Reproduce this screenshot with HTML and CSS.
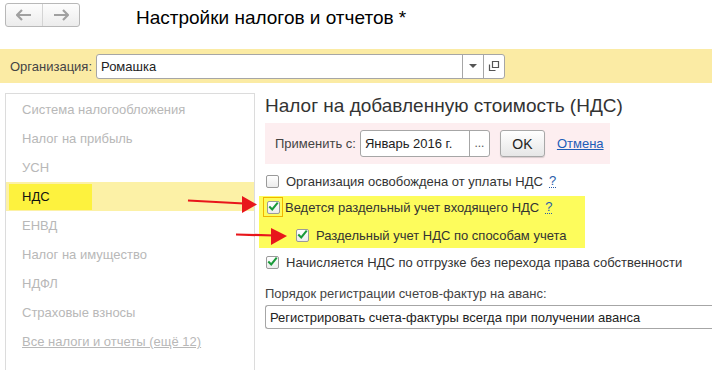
FILE: index.html
```html
<!DOCTYPE html>
<html lang="ru">
<head>
    <meta charset="UTF-8">
    <title>Настройки налогов и отчетов</title>
    <link rel="stylesheet" href="styles.css">
</head>
<body>
    <div class="topbar">
        <div class="navgroup">
            <span class="navbtn">
                <svg width="16" height="12" viewBox="0 0 16 12"><path d="M1 6h14M6 1L1 6l5 5" fill="none" stroke="#a0a0a0" stroke-width="2.2"/></svg>
            </span>
            <span class="navbtn">
                <svg width="16" height="12" viewBox="0 0 16 12"><path d="M1 6h14M10 1l5 5-5 5" fill="none" stroke="#a0a0a0" stroke-width="2.2"/></svg>
            </span>
        </div>
        <div class="title">Настройки налогов и отчетов *</div>
    </div>

    <div class="orgbar">
        <span class="orglabel">Организация:</span>
        <div class="field orgfield">
            <span class="fieldtext">Ромашка</span>
            <span class="fieldbtn"><svg width="8" height="4" viewBox="0 0 8 4"><path d="M0 0h8L4 4z" fill="#555"/></svg></span>
            <span class="fieldbtn"><svg width="12" height="12" viewBox="0 0 12 12"><path d="M4.5 1.5h6v6h-6z M1.5 4.5v6h6" fill="none" stroke="#555" stroke-width="1.2"/></svg></span>
        </div>
    </div>

    <div class="main">
        <div class="sidebar">
            <div class="navitem">Система налогообложения</div>
            <div class="navitem">Налог на прибыль</div>
            <div class="navitem">УСН</div>
            <div class="navitem active"><span class="mark">НДС</span></div>
            <div class="navitem">ЕНВД</div>
            <div class="navitem">Налог на имущество</div>
            <div class="navitem">НДФЛ</div>
            <div class="navitem">Страховые взносы</div>
            <div class="navitem"><a class="navlink">Все налоги и отчеты (ещё 12)</a></div>
        </div>

        <div class="content">
            <h2 class="heading">Налог на добавленную стоимость (НДС)</h2>
            <div class="apply">
                <span class="applylabel">Применить с:</span>
                <div class="field datefield">
                    <span class="fieldtext">Январь 2016 г.</span>
                    <span class="fieldbtn dots">...</span>
                </div>
                <span class="okbtn">OK</span>
                <a class="cancel">Отмена</a>
            </div>

            <div class="checkrow">
                <span class="box"></span>
                <span>Организация освобождена от уплаты НДС</span>
                <span class="help">?</span>
            </div>

            <div class="highlight">
                <div class="checkrow first">
                    <span class="focus"><span class="box checked"><svg width="13" height="11" viewBox="0 0 13 11"><path d="M1.5 5.5l3.5 3.5 6.5-8" fill="none" stroke="#1a9a3a" stroke-width="2.4"/></svg></span></span>
                    <span>Ведется раздельный учет входящего НДС</span>
                    <span class="help">?</span>
                </div>
                <div class="checkrow sub">
                    <span class="box checked"><svg width="13" height="11" viewBox="0 0 13 11"><path d="M1.5 5.5l3.5 3.5 6.5-8" fill="none" stroke="#1a9a3a" stroke-width="2.4"/></svg></span>
                    <span>Раздельный учет НДС по способам учета</span>
                </div>
            </div>

            <div class="checkrow">
                <span class="box checked"><svg width="13" height="11" viewBox="0 0 13 11"><path d="M1.5 5.5l3.5 3.5 6.5-8" fill="none" stroke="#1a9a3a" stroke-width="2.4"/></svg></span>
                <span>Начисляется НДС по отгрузке без перехода права собственности</span>
            </div>

            <div class="selectlabel">Порядок регистрации счетов-фактур на аванс:</div>
            <div class="field selectfield">
                <span class="fieldtext">Регистрировать счета-фактуры всегда при получении аванса</span>
            </div>
        </div>
    </div>

    <svg class="arrows" width="712" height="370" viewBox="0 0 712 370">
        <path d="M188 200.5L244 203.5" stroke="#e8161b" stroke-width="2.2"/>
        <path d="M257 204.5L242 196L242 213z" fill="#e8161b"/>
        <path d="M236 234.5L274 235.5" stroke="#e8161b" stroke-width="2.2"/>
        <path d="M287 236L271 228L271 245z" fill="#e8161b"/>
    </svg>
</body>
</html>
```

FILE: styles.css
```css
body { margin: 0; font-family: "Liberation Sans", Arial, sans-serif; font-size: 13px; color: #333; width: 712px; height: 370px; overflow: hidden; position: relative; background: #fff; }

.topbar { height: 49px; display: flex; align-items: flex-start; }
.navgroup { display: flex; margin: 3px 0 0 5px; border: 1px solid #b8b8b8; border-radius: 3px; background: linear-gradient(#fdfdfd, #ececec); }
.navbtn { width: 36px; height: 22px; display: flex; align-items: center; justify-content: center; }
.navbtn + .navbtn { border-left: 1px solid #d4d4d4; }
.title { margin: 7px 0 0 56px; font-size: 19px; color: #000; }

.orgbar { height: 34px; background: #fbeba4; display: flex; align-items: center; padding-left: 10px; }
.orglabel { color: #444; margin-right: 4px; }

.field { display: flex; align-items: stretch; border: 1px solid #a6a6a6; border-radius: 3px; background: #fff; box-sizing: border-box; }
.fieldtext { flex: 1; padding-left: 4px; display: flex; align-items: center; color: #222; white-space: nowrap; }
.fieldbtn { width: 20px; border-left: 1px solid #a6a6a6; display: flex; align-items: center; justify-content: center; }
.orgfield { width: 409px; height: 25px; }
.orgfield .fieldbtn:first-of-type { width: 21px; }

.main { display: flex; padding-top: 10px; }
.sidebar { margin-left: 5px; width: 248px; height: 290px; border: 1px solid #dcdcdc; border-bottom: none; padding-top: 1px; }
.navitem { height: 29px; line-height: 29px; padding-left: 16px; color: #b8b8b8; }
.navitem.active { background: #fcf1a6; padding-left: 3px; display: flex; align-items: center; }
.mark { background: #fdf23e; color: #111; width: 70px; height: 26px; line-height: 26px; padding-left: 13px; }
.navlink { color: #b8b8b8; text-decoration: underline; }

.content { margin-left: 10px; flex: 1; }
.heading { margin: 1px 0 0; font-size: 19px; font-weight: normal; color: #333; line-height: 24px; }
.apply { margin-top: 5px; width: 345px; height: 41px; background: #fdeef0; display: flex; align-items: center; padding-left: 10px; box-sizing: border-box; }
.applylabel { color: #444; margin-right: 4px; }
.datefield { width: 130px; height: 27px; }
.dots { font-size: 12px; color: #555; align-items: flex-end; padding-bottom: 6px; box-sizing: border-box; }
.okbtn { margin-left: 10px; width: 45px; height: 27px; box-sizing: border-box; border: 1px solid #a8a8a8; border-radius: 3px; background: linear-gradient(#ffffff, #e6e6e6); box-shadow: 0 1px 1px rgba(0,0,0,0.15); display: flex; align-items: center; justify-content: center; color: #222; font-size: 14px; }
.cancel { margin-left: 12px; color: #1d5db8; text-decoration: underline; }

.checkrow { display: flex; align-items: center; height: 26px; margin-top: 4px; padding-left: 1px; }
.box { width: 13px; height: 13px; box-sizing: border-box; border: 1px solid #9a9a9a; border-radius: 2px; background: linear-gradient(#ffffff, #ececec); margin-right: 7px; display: flex; align-items: center; justify-content: center; flex: none; }
.box svg { margin-top: -1px; }
.help { margin-left: 6px; color: #2a5ca8; border-bottom: 1px dotted #2a5ca8; line-height: 12px; }

.highlight { margin-left: -6px; width: 326px; height: 52px; background: #fdfc5c; margin-top: 2px; padding-top: 1px; box-sizing: border-box; }
.highlight .checkrow { margin-top: 0; }
.highlight .first { height: 20px; padding-left: 4px; }
.focus { width: 20px; height: 20px; box-sizing: border-box; border: 1px solid #f0b400; display: flex; align-items: center; justify-content: center; margin-right: 2px; }
.focus .box { margin-right: 0; }
.sub { padding-left: 37px; margin-top: 6px !important; height: 24px; }
.highlight + .checkrow { margin-top: 1px; }

.selectlabel { margin-top: 11px; color: #444; height: 17px; }
.selectfield { margin-top: 2px; height: 24px; border-right: none; border-radius: 3px 0 0 3px; }

.arrows { position: absolute; left: 0; top: 0; pointer-events: none; }
```
